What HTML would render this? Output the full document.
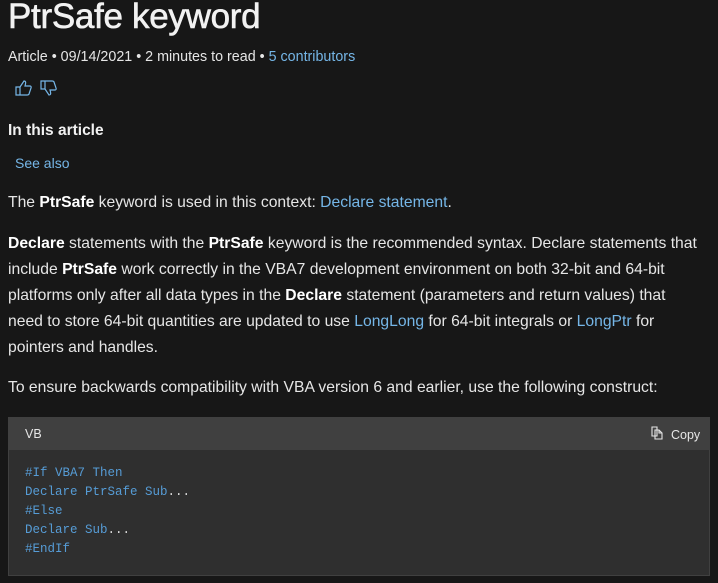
<!DOCTYPE html>
<html><head><style>
body{margin:0;background:#171717;color:#e6e6e6;font-family:"Liberation Sans",sans-serif;width:718px;height:583px;overflow:hidden;position:relative}
.a{position:absolute;white-space:nowrap}
a{color:#75b6e7;text-decoration:none}
h1{position:absolute;left:8px;top:-3px;margin:0;font-size:35px;font-weight:normal;color:#f2f2f2;-webkit-text-stroke:0.6px #f2f2f2;letter-spacing:-0.3px}
.meta{left:8px;top:49px;font-size:14.3px;color:#e6e6e6}
.p{left:8px;font-size:15.7px;line-height:26px;color:#e6e6e6}
b{font-weight:bold;color:#fff}
.code{position:absolute;left:8px;top:417px;width:700px;height:157px;border:1px solid #404040;background:#2f2f2f}
.hd{height:32px;background:#404040;font-size:12.5px;color:#e6e6e6}
pre{margin:0;position:absolute;left:16px;top:46px;font-family:"Liberation Mono",monospace;font-size:12.5px;line-height:19px;color:#569cd6}
</style></head><body>
<h1>PtrSafe keyword</h1>
<div class="a meta">Article • 09/14/2021 • 2 minutes to read • <a>5 contributors</a></div>
<svg class="a" style="left:15px;top:79px" width="44" height="18" viewBox="0 0 44 18" fill="none" stroke="#75b6e7" stroke-width="1.2">
<path d="M1 8h4v8H1z M5 8l4-6c1.5 0 2 1 1.5 3L10 7h5c1 0 1.5 1 1 2l-2 6c-.3.8-1 1-2 1H5"/>
<path d="M26 10h4V2h-4z M30 10l4 6c1.5 0 2-1 1.5-3L35 11h5c1 0 1.5-1 1-2l-2-6c-.3-.8-1-1-2-1h-7"/>
</svg>
<div class="a" style="left:8px;top:122px;font-size:15.5px;font-weight:bold;color:#f2f2f2">In this article</div>
<div class="a" style="left:15px;top:155px;font-size:14px"><a>See also</a></div>
<div class="a p" style="top:190px">The <b>PtrSafe</b> keyword is used in this context: <a>Declare statement</a>.</div>
<div class="a p" style="top:231px"><b>Declare</b> statements with the <b>PtrSafe</b> keyword is the recommended syntax. Declare statements that<br>include <b>PtrSafe</b> work correctly in the VBA7 development environment on both 32-bit and 64-bit<br>platforms only after all data types in the <b>Declare</b> statement (parameters and return values) that<br>need to store 64-bit quantities are updated to use <a>LongLong</a> for 64-bit integrals or <a>LongPtr</a> for<br>pointers and handles.</div>
<div class="a p" style="top:375px">To ensure backwards compatibility with VBA version 6 and earlier, use the following construct:</div>
<div class="code"><div class="hd"><span class="a" style="left:16px;top:9px">VB</span>
<svg class="a" style="left:642px;top:8px" width="13" height="14" viewBox="0 0 13 14" fill="none" stroke="#e6e6e6" stroke-width="1.1"><path d="M1 1h5v9H1z M4 4h4l3 3v6H4z M8 4v3h3"/></svg>
<span class="a" style="left:662px;top:10px">Copy</span></div>
<pre>#If VBA7 Then
Declare PtrSafe Sub<span style="color:#ddd">...</span>
#Else
Declare Sub<span style="color:#ddd">...</span>
#EndIf</pre></div>
</body></html>
